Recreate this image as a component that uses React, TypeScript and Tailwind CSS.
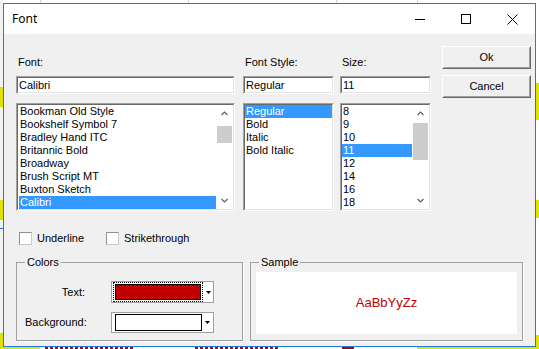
import React from "react";

function Chevron({ down }: { down?: boolean }) {
  return (
    <svg width="7" height="5" viewBox="0 0 7 5" className="block">
      <polyline
        points={down ? "0.5,1 3.5,4 6.5,1" : "0.5,4 3.5,1 6.5,4"}
        fill="none"
        stroke="#606060"
        strokeWidth="1.2"
      />
    </svg>
  );
}

function Sunken({ className, children }: { className: string; children?: React.ReactNode }) {
  return (
    <div className={"border border-t-[#a0a0a0] border-l-[#a0a0a0] border-b-white border-r-white " + className}>
      <div className="h-full border border-t-[#696969] border-l-[#696969] border-b-[#e3e3e3] border-r-[#e3e3e3] bg-white overflow-hidden">
        {children}
      </div>
    </div>
  );
}

function Item({ text, sel }: { text: string; sel?: boolean }) {
  return (
    <div
      className={
        sel
          ? "h-[13px] leading-[13px] pl-[1px] bg-[#3399ff] text-white whitespace-nowrap"
          : "h-[13px] leading-[13px] pl-[1px] text-black whitespace-nowrap"
      }
    >
      {text}
    </div>
  );
}

function Label({ text }: { text: string }) {
  return <div className="h-[13px] leading-[13px] pl-[2px] text-black">{text}</div>;
}

function Button({ text }: { text: string }) {
  return (
    <div className="h-[23px] border border-t-white border-l-white border-b-[#696969] border-r-[#696969]">
      <div className="h-full border border-t-[#f0f0f0] border-l-[#f0f0f0] border-b-[#a0a0a0] border-r-[#a0a0a0] bg-[#f0f0f0] flex items-center justify-center text-black">
        {text}
      </div>
    </div>
  );
}

function Checkbox({ text }: { text: string }) {
  return (
    <div className="flex items-center h-[13px]">
      <div className="w-[13px] h-[13px] border border-t-[#8f8f8f] border-l-[#8f8f8f] border-b-[#c8c8c8] border-r-[#c8c8c8] bg-white" />
      <span className="ml-[5px] leading-[13px] text-black">{text}</span>
    </div>
  );
}

function DownTri() {
  return (
    <svg width="5" height="3" viewBox="0 0 5 3" className="block">
      <polygon points="0,0 5,0 2.5,3" fill="#000" />
    </svg>
  );
}

export default function App() {
  const fonts = [
    "Bookman Old Style",
    "Bookshelf Symbol 7",
    "Bradley Hand ITC",
    "Britannic Bold",
    "Broadway",
    "Brush Script MT",
    "Buxton Sketch",
  ];
  const sizes = ["8", "9", "10"];
  const sizes2 = ["12", "14", "16", "18"];
  return (
    <div className="relative w-[539px] h-[349px] overflow-hidden bg-white font-['Liberation_Sans',Arial,sans-serif] text-[11px]">
      {/* spreadsheet behind the dialog */}
      <div className="absolute left-0 top-0 w-full h-[3px] bg-white" />
      <div className="absolute left-[40px] top-0 w-px h-[3px] bg-[#d4d4d4]" />
      <div className="absolute left-[188px] top-0 w-px h-[3px] bg-[#d4d4d4]" />
      <div className="absolute left-[336px] top-0 w-px h-[3px] bg-[#d4d4d4]" />
      <div className="absolute left-[417px] top-0 w-px h-[3px] bg-[#d4d4d4]" />
      <div className="absolute left-0 top-0 w-[3px] h-full bg-[#f3f3f3]" />
      <div className="absolute left-0 top-[87px] w-[3px] h-[20px] bg-[#e1e100]" />
      <div className="absolute left-0 top-[200px] w-[3px] h-[20px] bg-[#e1e100]" />
      <div className="absolute left-0 top-[333px] w-[3px] h-[16px] bg-[#e1e100]" />
      <div className="absolute left-0 top-[228px] w-[3px] h-px bg-[#1e6fd0]" />
      <div className="absolute right-0 top-0 w-[3px] h-full bg-white" />
      <div className="absolute right-0 top-[83px] w-[3px] h-[37px] bg-[#e1e100]" />
      <div className="absolute right-0 top-[200px] w-[3px] h-[18px] bg-[#e1e100]" />
      <div className="absolute right-0 top-[335px] w-[3px] h-[14px] bg-[#e1e100]" />
      <div className="absolute left-0 bottom-0 w-full h-[2px] bg-white" />
      <div className="absolute left-0 bottom-0 w-[40px] h-[2px] bg-[#e1e100]" />
      <div className="absolute left-[45px] bottom-0 w-[90px] h-[2px] bg-[repeating-linear-gradient(90deg,#c00000_0_3px,transparent_3px_5px)]" />
      <div className="absolute left-[195px] bottom-0 w-[85px] h-[2px] bg-[repeating-linear-gradient(90deg,#c00000_0_3px,transparent_3px_5px)]" />
      <div className="absolute left-[342px] bottom-0 w-[12px] h-[2px] bg-[#c00000]" />
      <div className="absolute left-[417px] bottom-0 w-[122px] h-[2px] bg-[#e1e100]" />

      {/* dialog window */}
      <div className="absolute left-[3px] top-[3px] w-[533px] h-[344px] border border-[#1e7bd6] bg-[#f0f0f0] flex flex-col">
        {/* title bar */}
        <div className="h-[30px] bg-white flex items-center shrink-0">
          <div className="pl-[8px] flex-1 text-[12px] text-black font-['Noto_Sans',Arial,sans-serif]">Font</div>
          <div className="w-[46px] h-full flex items-center justify-center">
            <div className="w-[10px] h-px bg-black" />
          </div>
          <div className="w-[46px] h-full flex items-center justify-center">
            <div className="w-[10px] h-[10px] border border-black" />
          </div>
          <div className="w-[46px] h-full flex items-center justify-center">
            <svg width="11" height="11" viewBox="0 0 11 11" className="block">
              <path d="M0.5 0.5 L10.5 10.5 M10.5 0.5 L0.5 10.5" stroke="#000" strokeWidth="1" />
            </svg>
          </div>
        </div>

        {/* body */}
        <div className="flex-1 pl-[12px] pt-[12px] flex flex-col">
          <div className="flex items-start">
            {/* Font column */}
            <div className="w-[219px] mt-[10px] flex flex-col">
              <Label text="Font:" />
              <Sunken className="mt-[7px] h-[18px]">
                <div className="h-full leading-[14px] pl-[1px] text-black">Calibri</div>
              </Sunken>
              <Sunken className="mt-[9px] h-[108px]">
                <div className="flex h-full">
                  <div className="flex-1 flex flex-col pl-[1px]">
                    {fonts.map((f) => (
                      <Item key={f} text={f} />
                    ))}
                    <Item text="Calibri" sel />
                  </div>
                  <div className="w-[17px] h-full flex flex-col bg-white">
                    <div className="h-[17px] flex items-center justify-center">
                      <Chevron />
                    </div>
                    <div className="flex-1 flex flex-col px-[1px]">
                      <div className="h-[4px]" />
                      <div className="h-[17px] bg-[#cdcdcd]" />
                    </div>
                    <div className="h-[17px] flex items-center justify-center">
                      <Chevron down />
                    </div>
                  </div>
                </div>
              </Sunken>
            </div>

            {/* Font style column */}
            <div className="w-[91px] ml-[8px] mt-[10px] flex flex-col">
              <Label text="Font Style:" />
              <Sunken className="mt-[7px] h-[18px]">
                <div className="h-full leading-[14px] pl-[1px] text-black">Regular</div>
              </Sunken>
              <Sunken className="mt-[9px] h-[108px]">
                <div className="flex flex-col">
                  <Item text="Regular" sel />
                  <Item text="Bold" />
                  <Item text="Italic" />
                  <Item text="Bold Italic" />
                </div>
              </Sunken>
            </div>

            {/* Size column */}
            <div className="w-[91px] ml-[6px] mt-[10px] flex flex-col">
              <Label text="Size:" />
              <Sunken className="mt-[7px] h-[18px]">
                <div className="h-full leading-[14px] pl-[1px] text-black">11</div>
              </Sunken>
              <Sunken className="mt-[9px] h-[108px]">
                <div className="flex h-full">
                  <div className="flex-1 flex flex-col">
                    {sizes.map((s) => (
                      <Item key={s} text={s} />
                    ))}
                    <Item text="11" sel />
                    {sizes2.map((s) => (
                      <Item key={s} text={s} />
                    ))}
                  </div>
                  <div className="w-[17px] h-full flex flex-col bg-white">
                    <div className="h-[17px] flex items-center justify-center">
                      <Chevron />
                    </div>
                    <div className="flex-1 flex flex-col px-[1px]">
                      <div className="h-[1px]" />
                      <div className="h-[37px] bg-[#cdcdcd]" />
                    </div>
                    <div className="h-[17px] flex items-center justify-center">
                      <Chevron down />
                    </div>
                  </div>
                </div>
              </Sunken>
            </div>

            {/* Buttons */}
            <div className="w-[89px] ml-[11px] flex flex-col gap-[6px]">
              <Button text="Ok" />
              <Button text="Cancel" />
            </div>
          </div>

          {/* checkboxes */}
          <div className="mt-[21px] ml-[3px] flex">
            <div className="w-[87px]">
              <Checkbox text="Underline" />
            </div>
            <Checkbox text="Strikethrough" />
          </div>

          {/* group boxes */}
          <div className="mt-[11px] flex gap-[7px]">
            <fieldset className="w-[227px] h-[85px] border border-[#a0a0a0] shadow-[1px_1px_0_#fff]">
              <legend className="ml-[8px] px-[2px] leading-[13px] text-black">Colors</legend>
              <div className="mt-[12px] flex items-center">
                <div className="w-[68px] text-right text-black">Text:</div>
                <div className="ml-[26px] w-[103px] h-[22px] border border-[#a0a0a0] bg-white flex items-center">
                  <div className="ml-[1px] w-[90px] h-[20px] border border-dotted border-black p-[1px]">
                    <div className="h-full border border-black bg-[#c00000]" />
                  </div>
                  <div className="flex-1 flex items-center justify-center">
                    <DownTri />
                  </div>
                </div>
              </div>
              <div className="mt-[9px] flex items-center">
                <div className="w-[94px] pl-[8px] text-black">Background:</div>
                <div className="w-[103px] h-[21px] border border-[#a0a0a0] bg-white flex items-center">
                  <div className="ml-[3px] w-[87px] h-[17px] border border-black bg-white" />
                  <div className="flex-1 flex items-center justify-center">
                    <DownTri />
                  </div>
                </div>
              </div>
            </fieldset>
            <fieldset className="w-[273px] h-[85px] border border-[#a0a0a0] shadow-[1px_1px_0_#fff] px-[5px]">
              <legend className="ml-[3px] px-[2px] leading-[13px] text-black">Sample</legend>
              <div className="mt-[3px] h-[62px] bg-white flex items-center justify-center text-[13px] text-[#c00000]">
                AaBbYyZz
              </div>
            </fieldset>
          </div>
        </div>
      </div>
    </div>
  );
}
